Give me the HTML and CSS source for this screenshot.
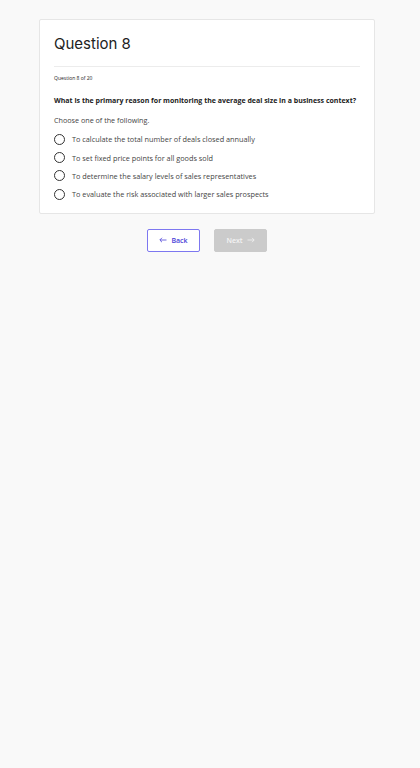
FILE: index.html
```html
<!DOCTYPE html>
<html lang="en">
<head>
  <meta charset="UTF-8" />
  <meta name="viewport" content="width=device-width,initial-scale=1.0"/>
  <title>Question 8</title>
  <link rel="stylesheet" href="styles.css">
</head>
<body>
  <div class="quiz-container">
    <div class="quiz-card">
      <h1 class="quiz-title">Question 8</h1>
      <p class="quiz-progress">Question 8 of 20</p>
      <p class="quiz-question">What is the primary reason for monitoring the average deal size in a business context?</p>
      <p class="quiz-hint">Choose one of the following.</p>
      <ul class="options">
        <li class="option"><span class="radio"></span>To calculate the total number of deals closed annually</li>
        <li class="option"><span class="radio"></span>To set fixed price points for all goods sold</li>
        <li class="option"><span class="radio"></span>To determine the salary levels of sales representatives</li>
        <li class="option"><span class="radio"></span>To evaluate the risk associated with larger sales prospects</li>
      </ul>
    </div>
    <div class="nav-buttons">
      <button class="btn btn-back">
        <svg width="8" height="6" viewBox="0 0 8 6"><path d="M7.5 3H1M3 0.8L0.8 3 3 5.2" fill="none" stroke="currentColor" stroke-width="0.8"/></svg>
        Back
      </button>
      <button class="btn btn-next" disabled>
        Next
        <svg width="8" height="6" viewBox="0 0 8 6"><path d="M0.5 3H7M5 0.8L7.2 3 5 5.2" fill="none" stroke="currentColor" stroke-width="0.8"/></svg>
      </button>
    </div>
  </div>
</body>
</html>
```

FILE: styles.css
```css
:root {
  --bg-color: #f9f9f9;
  --card-border: #e6e6e6;
  --text-color: #222;
  --accent-color: #4b41d8;
  --disabled-color: #cbcbcb;
}
* { margin: 0; padding: 0; box-sizing: border-box; }
body {
  font-family: 'Open Sans', sans-serif;
  background: var(--bg-color);
  color: var(--text-color);
  min-height: 100vh;
}
.quiz-container { width: 336px; margin-left: 39px; padding-top: 19px; }
.quiz-card {
  background: #fff;
  border: 1px solid var(--card-border);
  border-radius: 2px;
  padding: 14px 14px 9px 14px;
}
.quiz-title {
  font-family: 'Inter', sans-serif;
  font-size: 15px;
  font-weight: 400;
  line-height: 20px;
  padding-bottom: 12px;
  border-bottom: 1px solid #ececec;
  color: #222;
}
.quiz-progress { font-size: 5px; line-height: 8px; margin-top: 7px; }
.quiz-question { font-size: 7px; font-weight: 700; line-height: 10px; margin-top: 14px; }
.quiz-hint { font-size: 7.2px; line-height: 10px; margin-top: 9px; color: #444; }
.options { list-style: none; margin-top: 5px; }
.option {
  display: flex;
  align-items: center;
  gap: 7px;
  height: 18.4px;
  font-size: 7.3px;
  color: #444;
}
.radio {
  width: 11px; height: 11px;
  border: 1px solid #333;
  border-radius: 50%;
  flex-shrink: 0;
}
.nav-buttons { display: flex; justify-content: center; gap: 14px; margin-top: 15px; }
.btn {
  width: 53px; height: 23px;
  display: flex; align-items: center; justify-content: center; gap: 4px;
  border-radius: 2px;
  font-family: 'Open Sans', sans-serif;
  font-size: 7px; font-weight: 600;
}
.btn-back { background: #fff; border: 1px solid #7d77f0; color: var(--accent-color); }
.btn-next { background: var(--disabled-color); border: 1px solid var(--disabled-color); color: #f4f4f4; }
```
